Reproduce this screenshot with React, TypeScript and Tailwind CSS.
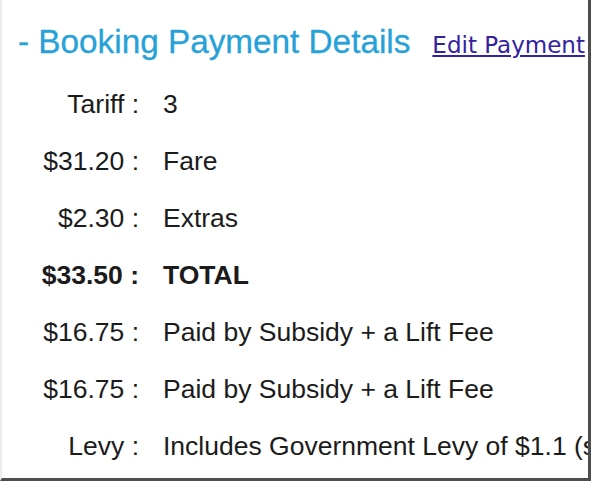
import React from "react";

const rows: { label: string; value: string; bold?: boolean }[] = [
  { label: "Tariff", value: "3" },
  { label: "$31.20", value: "Fare" },
  { label: "$2.30", value: "Extras" },
  { label: "$33.50", value: "TOTAL", bold: true },
  { label: "$16.75", value: "Paid by Subsidy + a Lift Fee" },
  { label: "$16.75", value: "Paid by Subsidy + a Lift Fee" },
  { label: "Levy", value: "Includes Government Levy of $1.1 (see note)" },
];

export default function App() {
  return (
    <div className="w-[596px] h-[483px] bg-white overflow-hidden">
      <div className="w-[591px] h-[481px] bg-white border-l-2 border-l-[#ececec] border-r-[3px] border-r-[#4d4d4d] border-b-[3px] border-b-[#4d4d4d] overflow-hidden">
        <div className="pt-[23px] pl-[16px] flex items-baseline whitespace-nowrap h-[61px]">
          <span
            className="text-[33.3px] leading-[38px] text-[#27a2d8]"
            style={{ fontFamily: '"Liberation Sans", Arial, sans-serif', WebkitTextStroke: "0.3px #27a2d8" }}
          >
            - Booking Payment Details
          </span>
          <a
            href="#"
            className="ml-[22px] text-[23px] leading-[38px] text-[#3423a0] underline underline-offset-[2px]"
            style={{ fontFamily: '"DejaVu Sans", Verdana, sans-serif' }}
          >
            Edit Payment
          </a>
        </div>
        <div
          className="mt-[15px] grid grid-cols-[137px_1fr] gap-x-[24px] text-[26.5px] leading-[57px] text-[#1b1b1b] whitespace-nowrap"
          style={{ fontFamily: '"Liberation Sans", Arial, sans-serif' }}
        >
          {rows.map((r, i) => (
            <React.Fragment key={i}>
              <div className={"text-right " + (r.bold ? "font-bold" : "")}>
                {r.label} :
              </div>
              <div className={r.bold ? "font-bold" : ""}>{r.value}</div>
            </React.Fragment>
          ))}
        </div>
      </div>
    </div>
  );
}
